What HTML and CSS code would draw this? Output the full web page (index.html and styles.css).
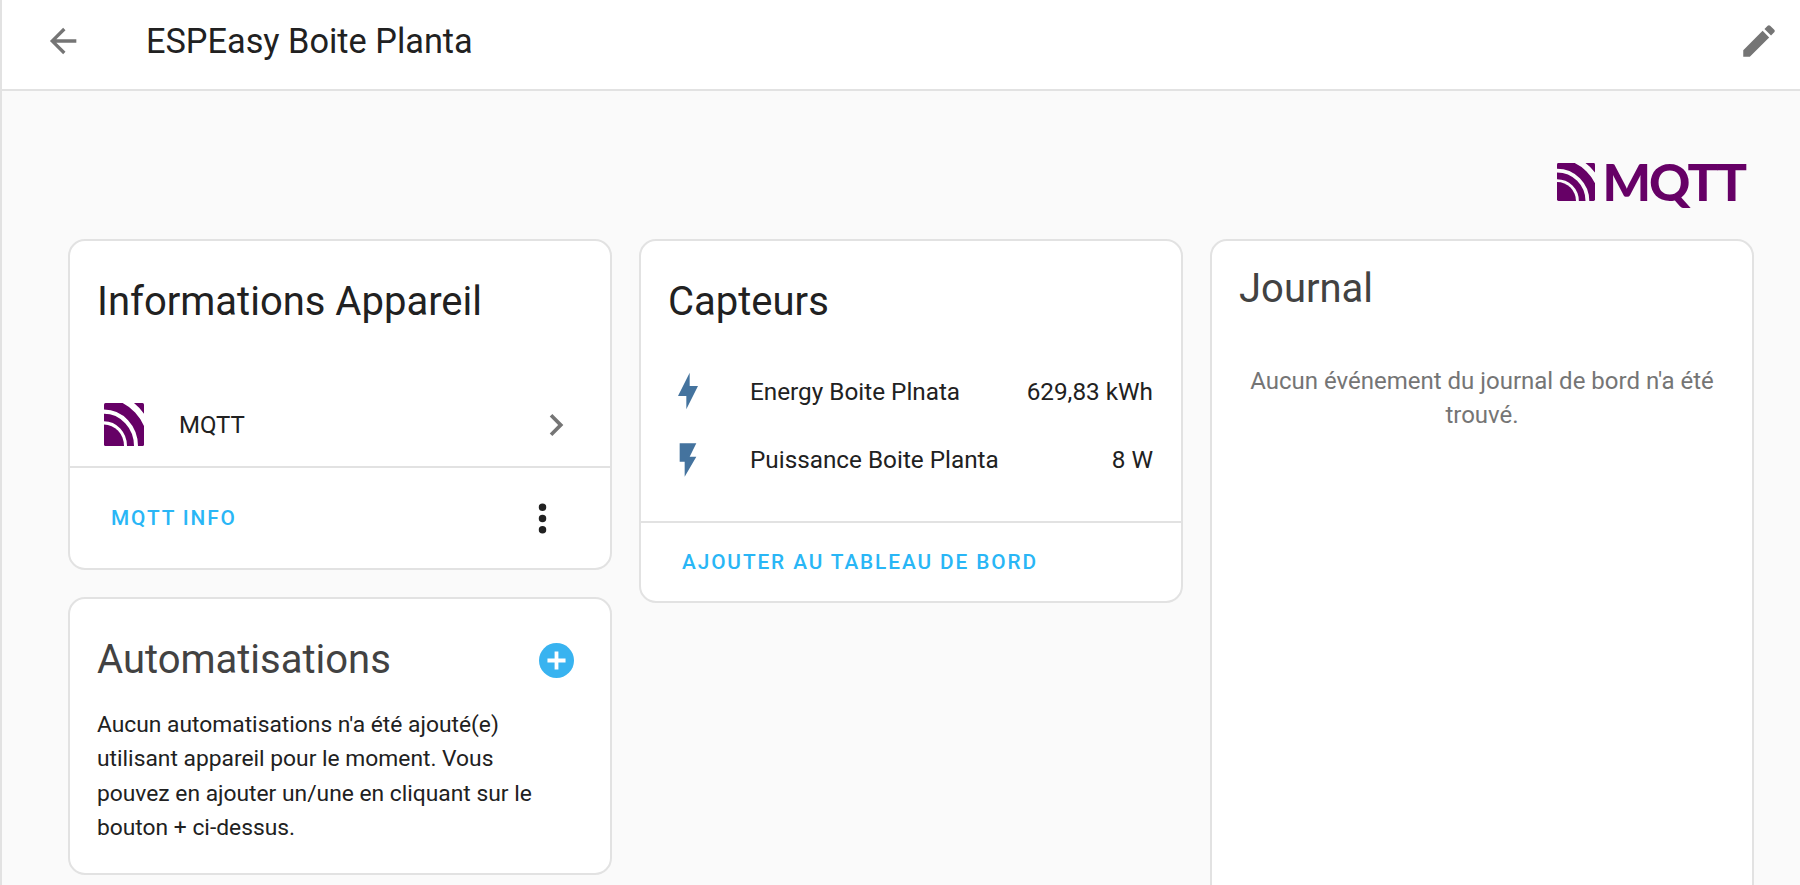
FILE: index.html
```html
<!DOCTYPE html>
<html lang="fr">
<head>
<meta charset="utf-8">
<title>ESPEasy Boite Planta</title>
<link rel="stylesheet" href="styles.css">
</head>
<body>
<header class="topbar">
  <svg class="back" viewBox="0 0 24 24"><path d="M20 11v2H8l5.5 5.5-1.42 1.42L4.16 12l7.92-7.92L13.5 5.5 8 11h12z"/></svg>
  <h1 class="page-title">ESPEasy Boite Planta</h1>
  <svg class="edit" viewBox="0 0 24 24"><path d="M20.71 7.04c.39-.39.39-1.04 0-1.41l-2.34-2.34c-.37-.39-1.02-.39-1.41 0l-1.84 1.83 3.75 3.75M3 17.25V21h3.75L17.81 9.93l-3.75-3.75L3 17.25z"/></svg>
</header>
<main class="content">
  <div class="brand">
    <svg class="brand-mark" viewBox="0 0 40 40" preserveAspectRatio="none"><use href="#mqtt-mark"/></svg>
    <span class="brand-text">MQTT</span>
  </div>
  <div class="columns">
    <div class="column">
      <section class="card">
        <h2 class="card-title info-title">Informations Appareil</h2>
        <div class="integration">
          <svg class="integration-icon" viewBox="0 0 40 40" preserveAspectRatio="none"><use href="#mqtt-mark"/></svg>
          <span class="integration-name">MQTT</span>
          <svg class="chevron" viewBox="0 0 24 24"><path d="M8.59 16.58 13.17 12 8.59 7.41 10 6l6 6-6 6-1.41-1.42z"/></svg>
        </div>
        <div class="actions actions-split">
          <span class="action-link">MQTT INFO</span>
          <svg class="dots" viewBox="0 0 24 24"><path d="M12 16a2 2 0 1 1 0 4 2 2 0 0 1 0-4zm0-6a2 2 0 1 1 0 4 2 2 0 0 1 0-4zm0-6a2 2 0 1 1 0 4 2 2 0 0 1 0-4z"/></svg>
        </div>
      </section>
      <section class="card auto-card">
        <div class="auto-head">
          <h2 class="card-title soft">Automatisations</h2>
          <svg class="plus" viewBox="0 0 24 24"><circle cx="12" cy="12" r="12"/><path class="plus-sign" d="M10.7 5.8h2.6v4.9h4.9v2.6h-4.9v4.9h-2.6v-4.9H5.8v-2.6h4.9z"/></svg>
        </div>
        <p class="auto-text">Aucun automatisations n'a été ajouté(e) utilisant appareil pour le moment. Vous pouvez en ajouter un/une en cliquant sur le bouton + ci-dessus.</p>
      </section>
    </div>
    <div class="column">
      <section class="card">
        <h2 class="card-title sensors-title">Capteurs</h2>
        <div class="sensors">
          <div class="sensor">
            <svg class="bolt" viewBox="0 0 24 24"><path d="M11 15H6l7-14v8h5l-7 14v-8z"/></svg>
            <span class="sensor-name">Energy Boite Plnata</span>
            <span class="sensor-value">629,83 kWh</span>
          </div>
          <div class="sensor">
            <svg class="bolt" viewBox="0 0 24 24"><path d="M7 2v11h3v9l7-12h-4l4-8z"/></svg>
            <span class="sensor-name">Puissance Boite Planta</span>
            <span class="sensor-value">8 W</span>
          </div>
        </div>
        <div class="actions">
          <span class="action-link">AJOUTER AU TABLEAU DE BORD</span>
        </div>
      </section>
    </div>
    <div class="column">
      <section class="card journal">
        <h2 class="card-title soft journal-title">Journal</h2>
        <p class="journal-empty">Aucun événement du journal de bord n'a été trouvé.</p>
      </section>
    </div>
  </div>
</main>
<svg class="defs" width="0" height="0">
  <defs>
    <clipPath id="mqtt-clip"><rect width="40" height="40" rx="1.5"/></clipPath>
    <g id="mqtt-mark" clip-path="url(#mqtt-clip)" fill="none" stroke="#660066">
      <circle cx="0" cy="40" r="20" fill="#660066" stroke="none"/>
      <circle cx="0" cy="40" r="26.5" stroke-width="7"/>
      <circle cx="0" cy="40" r="39" stroke-width="10"/>
      <path d="M30 0H40V10A50 50 0 0 0 30 0z" fill="#660066" stroke="none"/>
    </g>
  </defs>
</svg>
</body>
</html>
```

FILE: styles.css
```css
* { box-sizing: border-box; }
body {
  margin: 0;
  height: 885px;
  overflow: hidden;
  background: #fafafa;
  border-left: 2px solid #e2e2e2;
  font-family: Roboto, "Liberation Sans", sans-serif;
  color: #212121;
}
.defs { position: absolute; }
.topbar {
  height: 91px;
  background: #fff;
  border-bottom: 2px solid #e2e2e2;
  display: flex;
  align-items: center;
  padding: 0 20px 7px 41px;
}
.back { width: 40px; height: 40px; fill: #757575; flex: none; }
.page-title {
  margin: 0 0 0 63px;
  font-size: 34.3px;
  font-weight: 400;
  flex: 1;
}
.edit { width: 42px; height: 42px; fill: #757575; flex: none; }
.content { padding: 0 46px 0 66px; }
.brand {
  height: 148px;
  display: flex;
  justify-content: flex-end;
  align-items: flex-start;
  padding: 72px 9px 0 0;
  color: #660066;
  gap: 8px;
}
.brand-mark { width: 38px; height: 38px; }
.brand-text { font-family: Lato, sans-serif; font-size: 51px; font-weight: 900; line-height: 38px; letter-spacing: -2px; }
.columns {
  display: grid;
  grid-template-columns: repeat(3, 1fr);
  gap: 27px;
}
.column { display: flex; flex-direction: column; gap: 27px; }
.card {
  background: #fff;
  border: 2px solid #e2e2e2;
  border-radius: 17px;
}
.card-title { margin: 0; font-size: 40px; font-weight: 400; line-height: 46px; }
.soft { color: #424242; }
.info-title { padding: 38px 27px 0; }
.integration {
  height: 143px;
  padding: 58px 32px 0 34px;
  display: flex;
  align-items: center;
  font-size: 24px;
  border-bottom: 2px solid #e2e2e2;
}
.integration-icon { width: 40px; height: 43px; }
.integration-name { flex: 1; margin-left: 35px; }
.chevron { width: 44px; height: 44px; fill: #757575; }
.actions {
  height: 78px;
  padding: 0 28px 0 41px;
  display: flex;
  align-items: center;
}
.actions-split { justify-content: space-between; height: 100px; padding-right: 45px; }
.action-link { color: #29b6f6; font-size: 20.8px; font-weight: 500; letter-spacing: 1.9px; }
.dots { width: 45px; height: 45px; fill: #212121; }
.auto-card { padding: 38px 27px 27px; }
.auto-head { display: flex; align-items: center; justify-content: space-between; padding-right: 9px; }
.plus { width: 35px; height: 35px; fill: #38b3f0; }
.plus-sign { fill: #fff; }
.auto-text { margin: 25px 0 0; padding-right: 15px; font-size: 22.8px; line-height: 34.4px; }
.sensors-title { padding: 38px 27px 0; }
.sensors { padding: 32px 28px 27px 27px; border-bottom: 2px solid #e2e2e2; }
.sensor { height: 68.5px; display: flex; align-items: center; font-size: 24.3px; }
.bolt { width: 40px; height: 40px; flex: none; fill: #44739e; }
.sensor-name { flex: 1; margin-left: 42px; }
.journal { height: 700px; }
.journal-title { padding: 25px 27px 0; }
.journal-empty { margin: 52px 28px 0; text-align: center; font-size: 24px; line-height: 34.4px; color: #757575; }
```
